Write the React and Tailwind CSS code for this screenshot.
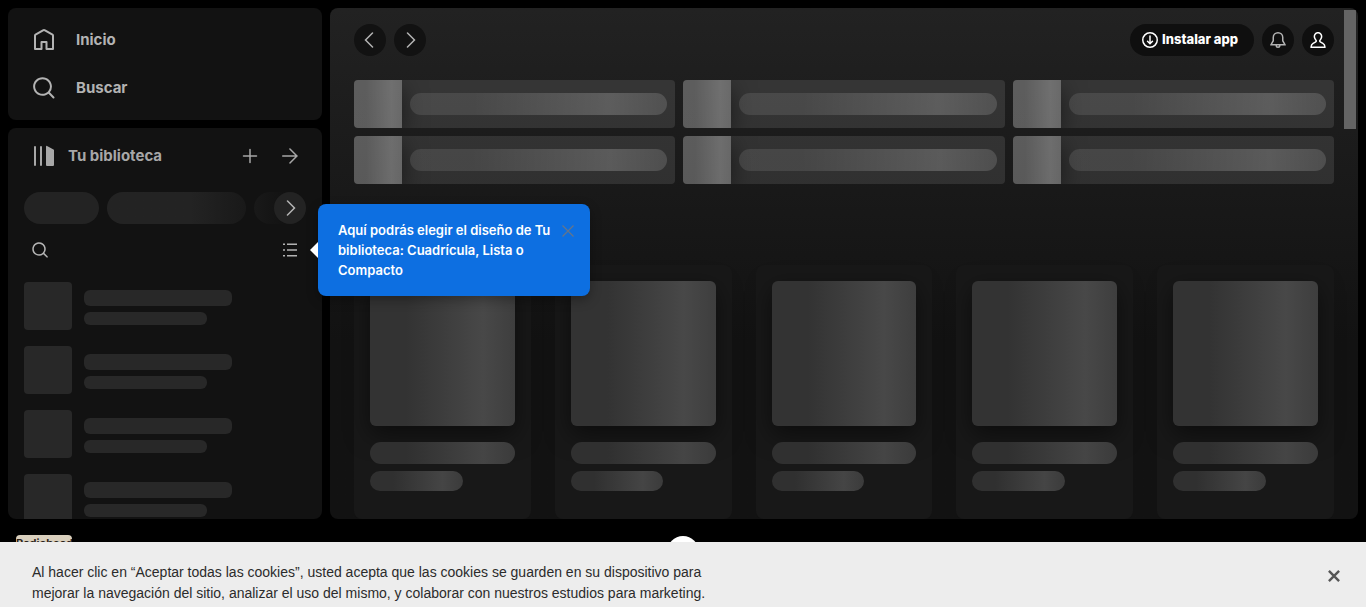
import React from "react";

const paths = {
  home: "M12.5 3.247a1 1 0 0 0-1 0L4 7.577V20h4.5v-6a1 1 0 0 1 1-1h5a1 1 0 0 1 1 1v6H20V7.577l-7.5-4.33zm-2-1.732a3 3 0 0 1 3 0l7.5 4.33a2 2 0 0 1 1 1.732V21a1 1 0 0 1-1 1h-6.5a1 1 0 0 1-1-1v-6h-3v6a1 1 0 0 1-1 1H3a1 1 0 0 1-1-1V7.577a2 2 0 0 1 1-1.732l7.5-4.33z",
  search:
    "M10.533 1.279c-5.18 0-9.407 4.14-9.407 9.279s4.226 9.279 9.407 9.279c2.234 0 4.29-.77 5.907-2.058l4.353 4.353a1 1 0 1 0 1.414-1.414l-4.344-4.344a9.157 9.157 0 0 0 2.077-5.816c0-5.14-4.226-9.28-9.407-9.28zm-7.407 9.279c0-4.006 3.302-7.28 7.407-7.28s7.407 3.274 7.407 7.28-3.302 7.279-7.407 7.279-7.407-3.273-7.407-7.28z",
  library:
    "M3 22a1 1 0 0 1-1-1V3a1 1 0 0 1 2 0v18a1 1 0 0 1-1 1zM15.5 2.134A1 1 0 0 0 14 3v18a1 1 0 0 0 1 1h6a1 1 0 0 0 1-1V6.464a1 1 0 0 0-.5-.866l-6-3.464zM9 2a1 1 0 0 0-1 1v18a1 1 0 1 0 2 0V3a1 1 0 0 0-1-1z",
  searchSmall:
    "M7 1.75a5.25 5.25 0 1 0 0 10.5 5.25 5.25 0 0 0 0-10.5zM.25 7a6.75 6.75 0 1 1 12.096 4.12l3.184 3.185a.75.75 0 1 1-1.06 1.06L11.304 12.2A6.75 6.75 0 0 1 .25 7z",
  plus: "M15.25 8a.75.75 0 0 1-.75.75H8.75v5.75a.75.75 0 0 1-1.5 0V8.75H1.5a.75.75 0 0 1 0-1.5h5.75V1.5a.75.75 0 0 1 1.5 0v5.75h5.75a.75.75 0 0 1 .75.75z",
  arrow:
    "M7.19 1A.749.749 0 0 1 8.47.47L16 7.99l-7.53 7.521a.75.75 0 0 1-1.234-.815.75.75 0 0 1 .174-.243l5.72-5.714H.75a.75.75 0 1 1 0-1.498h12.38L7.41 1.529a.749.749 0 0 1-.22-.53z",
  left: "M11.03.47a.75.75 0 0 1 0 1.06L4.56 8l6.47 6.47a.75.75 0 1 1-1.06 1.06L2.44 8 9.97.47a.75.75 0 0 1 1.06 0z",
  right:
    "M4.97.47a.75.75 0 0 0 0 1.06L11.44 8l-6.47 6.47a.75.75 0 1 0 1.06 1.06L13.56 8 6.03.47a.75.75 0 0 0-1.06 0z",
  install:
    "M4.995 8.745a.75.75 0 0 1 1.06 0L7.25 9.939V4a.75.75 0 0 1 1.5 0v5.94l1.195-1.195a.75.75 0 1 1 1.06 1.06L8 12.811l-3.005-3.006a.75.75 0 0 1 0-1.06zM0 8a8 8 0 1 1 16 0A8 8 0 0 1 0 8zm8-6.5a6.5 6.5 0 1 0 0 13 6.5 6.5 0 0 0 0-13z",
  bell: "M8 1.5a4 4 0 0 0-4 4v3.27a.75.75 0 0 1-.1.373L2.255 12h11.49L12.1 9.142a.75.75 0 0 1-.1-.374V5.5a4 4 0 0 0-4-4zm-5.5 4a5.5 5.5 0 0 1 11 0v3.067l2.193 3.809a.75.75 0 0 1-.65 1.124H10.5a2.5 2.5 0 0 1-5 0H.957a.75.75 0 0 1-.65-1.124L2.5 8.569V5.5zm4.5 8a1 1 0 1 0 2 0H7z",
  user: "M6.233.371a4.388 4.388 0 0 1 5.002 1.052c.421.459.713.992.904 1.554.143.421.263 1.173.22 1.894-.078 1.322-.638 2.408-1.399 3.316l-.127.152a.75.75 0 0 0 .201 1.13l2.209 1.275a4.75 4.75 0 0 1 2.375 4.114V16H.382v-1.143a4.75 4.75 0 0 1 2.375-4.113l2.209-1.275a.75.75 0 0 0 .201-1.13l-.126-.152c-.761-.908-1.322-1.994-1.4-3.316-.043-.721.077-1.473.22-1.894a4.346 4.346 0 0 1 .904-1.554c.411-.448.91-.807 1.468-1.052zM8 1.5a2.888 2.888 0 0 0-2.13.937 2.85 2.85 0 0 0-.588 1.022c-.077.226-.175.783-.143 1.323.054.921.44 1.712 1.051 2.442l.002.001.127.153a2.25 2.25 0 0 1-.603 3.39l-2.209 1.275A3.25 3.25 0 0 0 1.902 14.5h12.196a3.25 3.25 0 0 0-1.605-2.457l-2.209-1.275a2.25 2.25 0 0 1-.603-3.39l.127-.153.002-.001c.612-.73.997-1.52 1.052-2.442.032-.54-.067-1.097-.144-1.323a2.85 2.85 0 0 0-.588-1.022A2.888 2.888 0 0 0 8 1.5z",
  list: "M15 14.5H5V13h10v1.5zm0-5.75H5v-1.5h10v1.5zM15 3H5V1.5h10V3zM3 3H1V1.5h2V3zm0 11.5H1V13h2v1.5zm0-5.75H1v-1.5h2v1.5z",
};

function Icon({ name, box = 16, className = "size-4" }) {
  return (
    <svg viewBox={`0 0 ${box} ${box}`} fill="currentColor" aria-hidden="true" className={`shrink-0 ${className}`}>
      <path d={paths[name]} fillRule="evenodd" />
    </svg>
  );
}

function IconButton({ label, icon, className = "" }) {
  return (
    <button type="button" aria-label={label} className={`flex size-8 shrink-0 items-center justify-center rounded-full ${className}`}>
      <Icon name={icon} />
    </button>
  );
}

function NavLink({ icon, children }) {
  return (
    <a href="#" className="flex h-12 items-center gap-5 px-6 text-[15px] font-bold">
      <Icon name={icon} box={24} className="size-6" />
      {children}
    </a>
  );
}

function LibraryItem() {
  return (
    <li className="flex gap-3">
      <div className="size-12 shrink-0 rounded bg-[#282828]" />
      <div className="flex flex-1 flex-col gap-1.5 pt-2">
        <div className="h-4 w-[148px] rounded-md bg-[#282828]" />
        <div className="h-[13px] w-[123px] rounded-md bg-[#282828]" />
      </div>
    </li>
  );
}

function Tooltip() {
  return (
    <div role="tooltip" className="absolute left-[302px] top-[76px] z-20 flex items-center">
      <div className="h-4 w-2 bg-white [clip-path:polygon(100%_0,100%_100%,0_50%)]" />
      <div className="flex w-[272px] items-start rounded-lg bg-[#0d6fe1] py-4 pl-5 pr-4 text-white shadow-[0_4px_12px_rgba(0,0,0,0.3)]">
        <p className="flex-1 text-[13px] font-semibold leading-5">
          Aquí podrás elegir el diseño de Tu biblioteca: Cuadrícula, Lista o Compacto
        </p>
        <button type="button" aria-label="Cerrar" className="mt-[5px] text-[#65758a]">
          <svg viewBox="0 0 12 12" className="size-3" stroke="currentColor" strokeWidth="1.2" aria-hidden="true">
            <path d="M.5.5l11 11M11.5.5l-11 11" />
          </svg>
        </button>
      </div>
    </div>
  );
}

function Sidebar() {
  return (
    <aside className="flex w-[314px] shrink-0 flex-col gap-2 text-[#b3b3b3]">
      <nav className="rounded-lg bg-[#121212] py-2">
        <NavLink icon="home">Inicio</NavLink>
        <NavLink icon="search">Buscar</NavLink>
      </nav>
      <section className="relative min-h-0 flex-1">
        <div className="h-full overflow-hidden rounded-lg bg-[#121212]">
          <header className="flex items-center gap-2 px-4 py-3">
            <button type="button" className="flex h-8 flex-1 items-center gap-3 pl-2 text-[15px] font-bold text-[#a7a7a7]">
              <Icon name="library" box={24} className="size-6" />
              Tu biblioteca
            </button>
            <IconButton label="Crear lista" icon="plus" className="text-[#a7a7a7]" />
            <IconButton label="Mostrar más" icon="arrow" className="text-[#a7a7a7]" />
          </header>
          <div className="flex gap-2 px-4 py-2">
            <div className="h-8 w-[75px] rounded-full bg-[#232323]" />
            <div className="h-8 w-[139px] rounded-full bg-linear-to-r from-[#232323] from-60% to-[#191919]" />
            <div className="flex h-8 flex-1 justify-end rounded-full bg-linear-to-r from-[#191919] to-[#121212] to-60%">
              <IconButton label="Siguiente" icon="right" className="bg-[#232323]" />
            </div>
          </div>
          <div className="flex items-center justify-between px-4 pt-0.5">
            <IconButton label="Buscar en Tu biblioteca" icon="searchSmall" />
            <IconButton label="Vista de lista" icon="list" />
          </div>
          <ul className="flex flex-col gap-4 px-4 py-4">
            {[0, 1, 2, 3, 4].map((i) => (
              <LibraryItem key={i} />
            ))}
          </ul>
        </div>
        <Tooltip />
      </section>
    </aside>
  );
}

function ShortcutCard() {
  return (
    <div className="flex h-12 items-center overflow-hidden rounded bg-white/10">
      <div className="size-12 shrink-0 bg-linear-to-r from-white/20 from-25% via-white/29 via-78% to-white/26 shadow-[0_8px_24px_rgba(0,0,0,0.5)]" />
      <div className="mx-2 h-[22px] flex-1 rounded-full bg-linear-to-r from-white/10 from-25% via-white/20 via-78% to-white/14" />
    </div>
  );
}

function AlbumCard() {
  return (
    <div className="rounded-lg bg-[#181818] px-4 pb-7 pt-4">
      <div className="aspect-square rounded-md bg-linear-to-r from-[#333] from-25% via-[#484848] via-78% to-[#3e3e3e] shadow-[0_8px_24px_rgba(0,0,0,0.5)]" />
      <div className="mt-4 h-[22px] rounded-full bg-linear-to-r from-[#303030] from-25% via-[#454545] via-78% to-[#3b3b3b]" />
      <div className="mt-[7px] h-5 w-16/25 rounded-full bg-linear-to-r from-[#303030] from-25% via-[#454545] via-78% to-[#3b3b3b]" />
    </div>
  );
}

function Main() {
  return (
    <main className="relative z-10 min-w-0 flex-1 overflow-hidden rounded-lg bg-[#121212] bg-linear-to-b from-[#222222] to-[#121212] to-[332px] px-6">
      <header className="flex items-center gap-2 py-4">
        <IconButton label="Atrás" icon="left" className="bg-[#121212] text-[#b3b3b3]" />
        <IconButton label="Adelante" icon="right" className="bg-[#121212] text-[#b3b3b3]" />
        <button type="button" className="ml-auto flex h-8 items-center gap-1 rounded-full bg-[#0f0f0f] pl-3 pr-4 text-[13px] font-extrabold text-white">
          <Icon name="install" />
          Instalar app
        </button>
        <IconButton label="Novedades" icon="bell" className="bg-[#0f0f0f] text-[#b3b3b3]" />
        <IconButton label="Perfil" icon="user" className="bg-[#0f0f0f] text-white" />
      </header>
      <section className="mt-2 grid grid-cols-3 gap-2">
        {[0, 1, 2, 3, 4, 5].map((i) => (
          <ShortcutCard key={i} />
        ))}
      </section>
      <section className="mt-[81px] grid grid-cols-5 gap-6">
        {[0, 1, 2, 3, 4].map((i) => (
          <AlbumCard key={i} />
        ))}
      </section>
      <div className="absolute right-0.5 top-0.5 h-[119px] w-3 bg-[#646464]" />
    </main>
  );
}

function PlayerBar() {
  return (
    <footer className="grid h-[88px] shrink-0 grid-cols-3 items-start px-4 pt-4">
      <div className="size-14 overflow-hidden rounded bg-[#d9cfbd] text-center text-[11px] font-bold leading-4 text-[#2b241c]">
        Radiohead
      </div>
      <button type="button" aria-label="Reproducir" className="mt-px size-8 justify-self-center rounded-full bg-white" />
    </footer>
  );
}

function CookieBanner() {
  return (
    <div role="dialog" aria-label="Cookies" className="absolute inset-x-0 bottom-0 z-30 flex items-start justify-between bg-[#ededed] pb-[3px] pl-8 pr-6 pt-5 text-[#2b2b2b]">
      <p className="max-w-[700px] font-['Liberation_Sans',sans-serif] text-sm leading-[21px]">
        Al hacer clic en “Aceptar todas las cookies”, usted acepta que las cookies se guarden en su dispositivo para
        mejorar la navegación del sitio, analizar el uso del mismo, y colaborar con nuestros estudios para marketing.
      </p>
      <button type="button" aria-label="Cerrar" className="mt-1.5 p-0.5 text-[#565656]">
        <svg viewBox="0 0 12 12" className="size-3" stroke="currentColor" strokeWidth="2.4" aria-hidden="true">
          <path d="M.9.9l10.2 10.2M11.1.9L.9 11.1" />
        </svg>
      </button>
    </div>
  );
}

export default function App() {
  return (
    <div className="relative flex h-screen flex-col overflow-hidden bg-black font-['Inter','Liberation_Sans',sans-serif]">
      <div className="flex min-h-0 flex-1 gap-2 px-2 pt-2">
        <div className="relative z-20 flex">
          <Sidebar />
        </div>
        <Main />
      </div>
      <PlayerBar />
      <CookieBanner />
    </div>
  );
}
